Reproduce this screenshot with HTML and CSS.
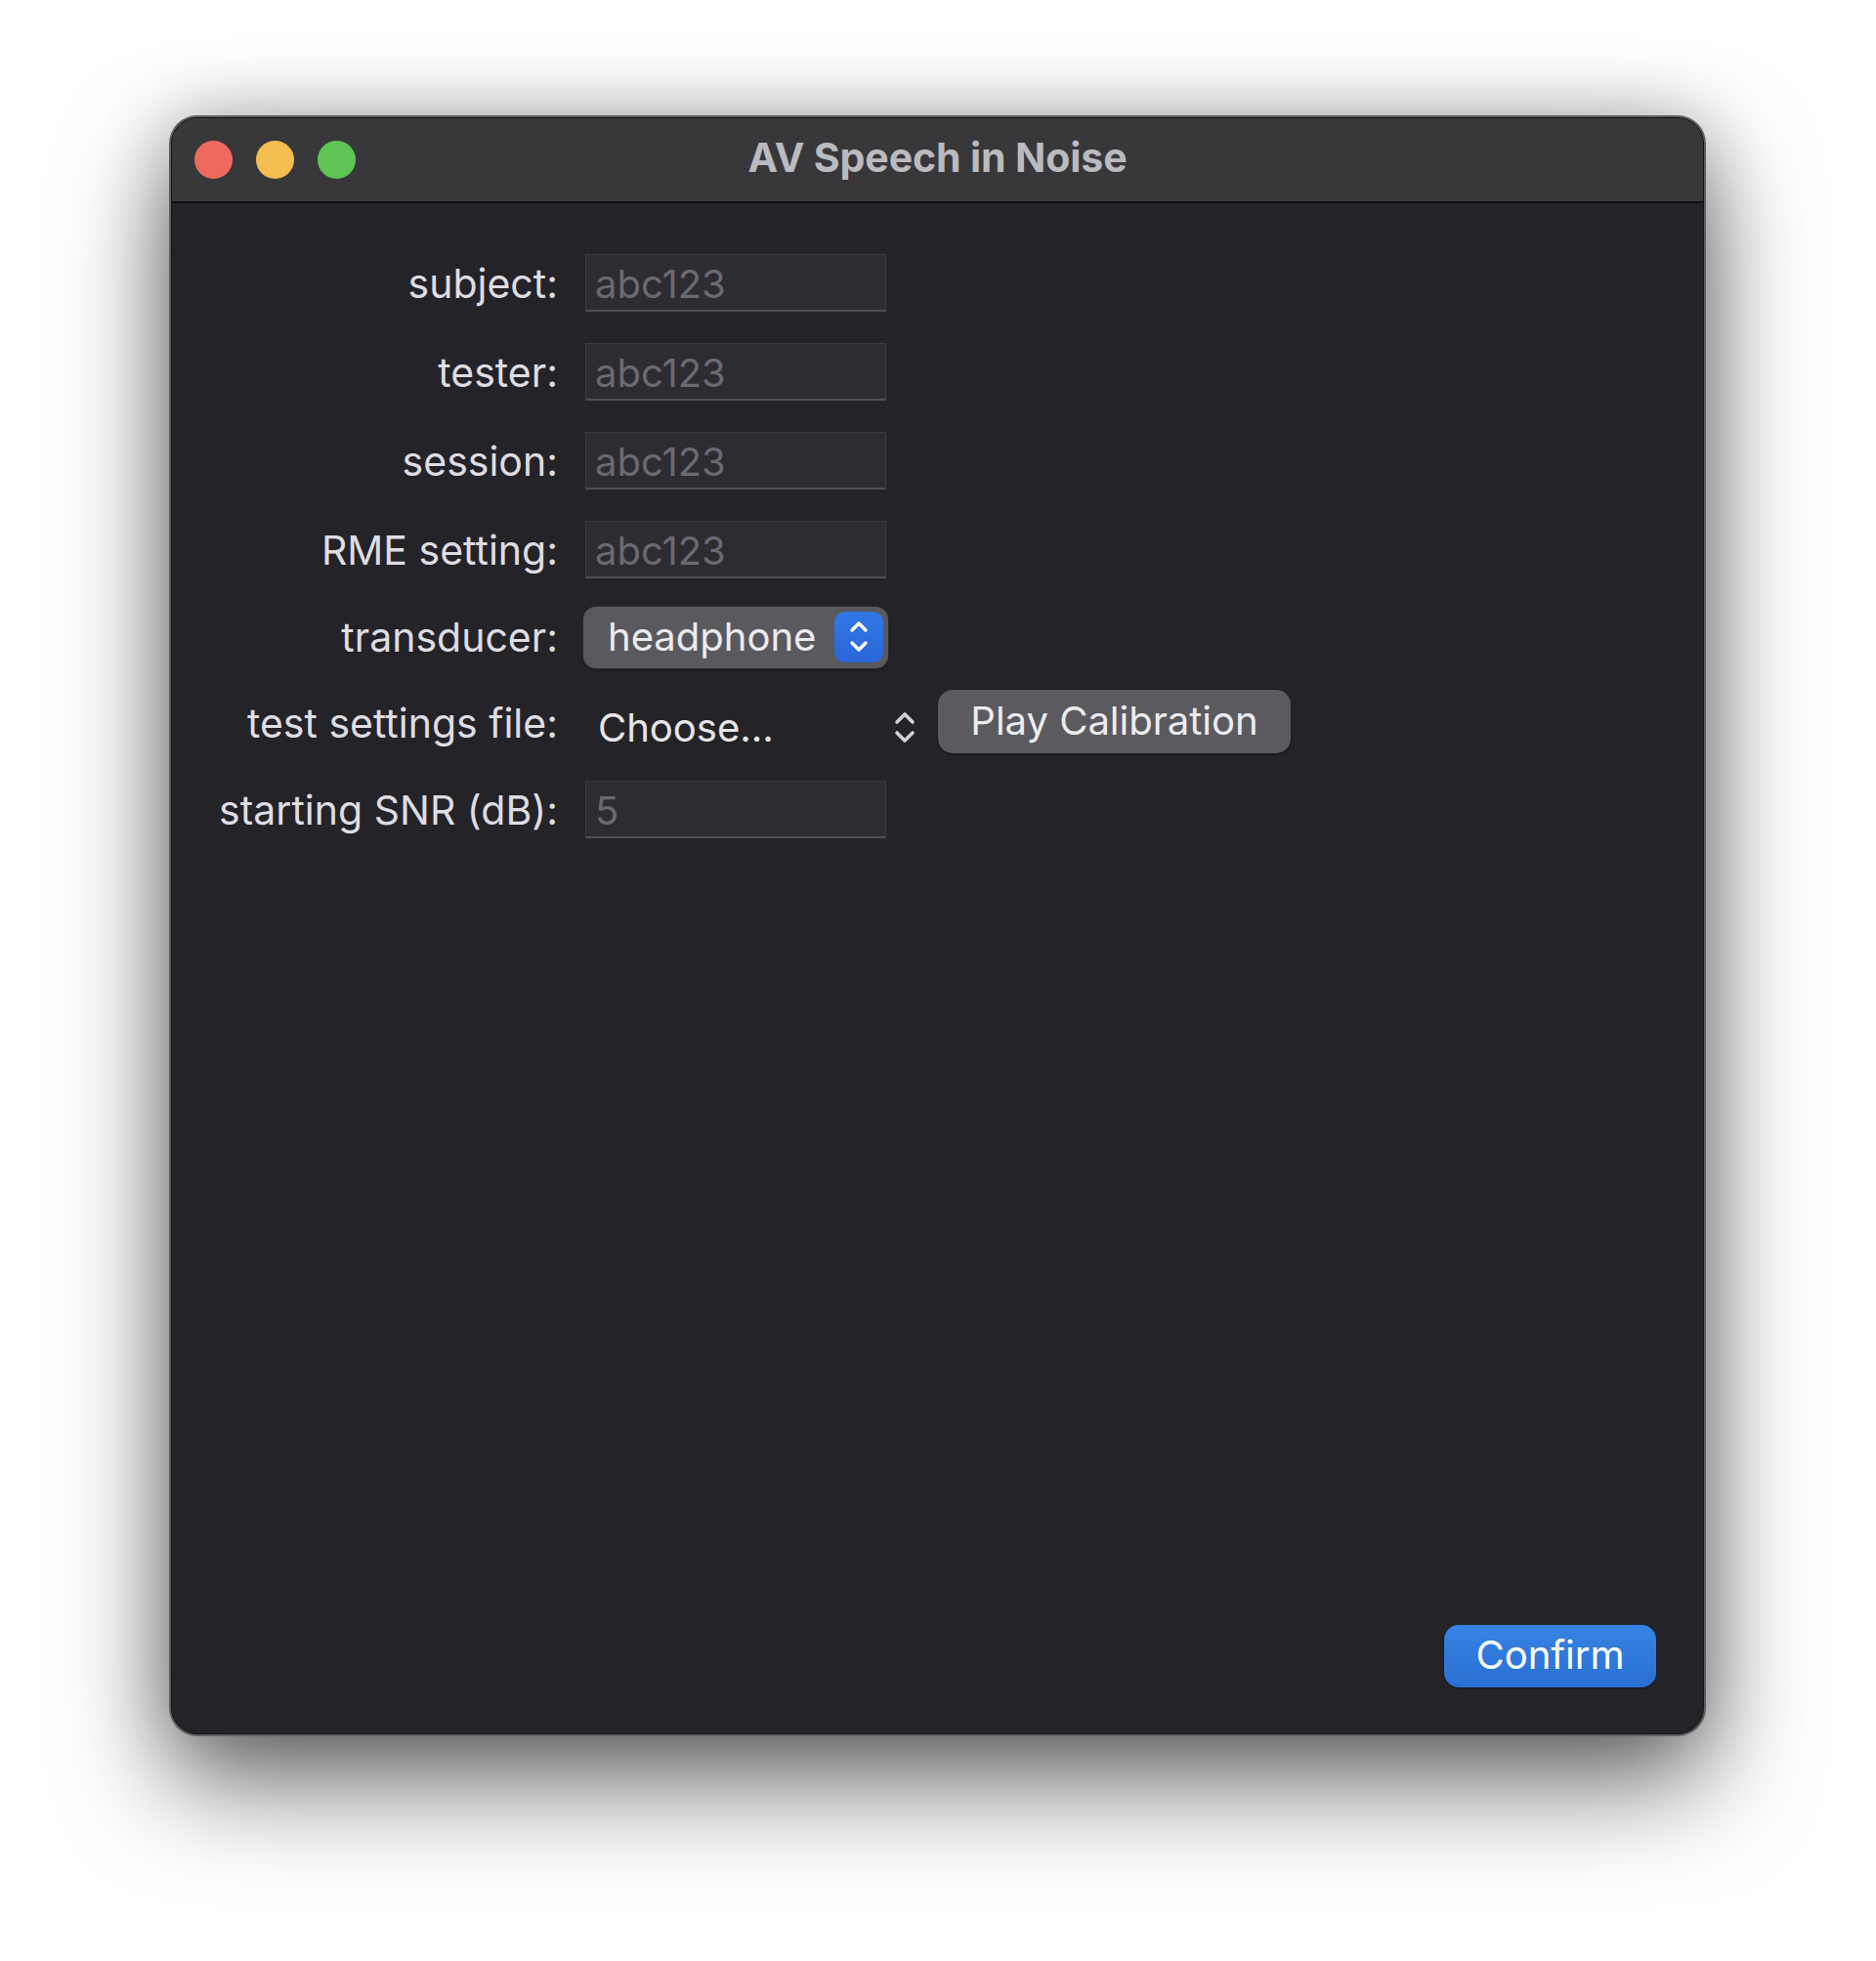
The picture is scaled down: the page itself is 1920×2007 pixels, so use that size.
FILE: index.html
```html
<!DOCTYPE html>
<html lang="en">
<head>
<meta charset="utf-8">
<title>AV Speech in Noise</title>
<link rel="stylesheet" href="styles.css">
</head>
<body>
<div class="desk">
  <div class="window">
    <div class="frame">
      <div class="titlebar">
        <div class="lights">
          <span class="light red"></span>
          <span class="light yellow"></span>
          <span class="light green"></span>
        </div>
        <div class="title">AV Speech in Noise</div>
        <div class="spacer"></div>
      </div>
      <div class="content">
        <div class="form">
          <label class="label">subject:</label>
          <div class="cell"><div class="field"><span class="placeholder">abc123</span></div></div>

          <label class="label">tester:</label>
          <div class="cell"><div class="field"><span class="placeholder">abc123</span></div></div>

          <label class="label">session:</label>
          <div class="cell"><div class="field"><span class="placeholder">abc123</span></div></div>

          <label class="label">RME setting:</label>
          <div class="cell"><div class="field"><span class="placeholder">abc123</span></div></div>

          <label class="label">transducer:</label>
          <div class="cell">
            <div class="popup">
              <span class="popup-text">headphone</span>
              <span class="stepper">
                <svg width="50" height="52" viewBox="0 0 50 52">
                  <polyline points="18,19 25,12 32,19" fill="none" stroke="#fff" stroke-width="3.4" stroke-linecap="round" stroke-linejoin="round"/>
                  <polyline points="18,32 25,39 32,32" fill="none" stroke="#fff" stroke-width="3.4" stroke-linecap="round" stroke-linejoin="round"/>
                </svg>
              </span>
            </div>
          </div>

          <label class="label">test settings file:</label>
          <div class="cell">
            <div class="choose">
              <span class="choose-text">Choose...</span>
              <svg class="choose-icon" width="26" height="40" viewBox="0 0 26 40">
                <polyline points="5,15 13,7 21,15" fill="none" stroke="#d2d2d6" stroke-width="3.6" stroke-linecap="round" stroke-linejoin="round"/>
                <polyline points="5,26 13,34 21,26" fill="none" stroke="#d2d2d6" stroke-width="3.6" stroke-linecap="round" stroke-linejoin="round"/>
              </svg>
            </div>
            <button class="btn">Play Calibration</button>
          </div>

          <label class="label">starting SNR (dB):</label>
          <div class="cell"><div class="field"><span class="placeholder">5</span></div></div>
        </div>
        <div class="footer">
          <button class="btn primary">Confirm</button>
        </div>
      </div>
    </div>
  </div>
</div>
</body>
</html>
```
FILE: styles.css
```css
html, body {
  margin: 0;
  padding: 0;
  background: #ffffff;
}
body {
  width: 1920px;
  height: 2007px;
  overflow: hidden;
  font-family: "Inter", "Noto Sans", sans-serif;
}
.desk {
  padding: 118px 0 0 173px;
}
.window {
  width: 1573px;
  height: 1659px;
  box-sizing: border-box;
  padding: 2px;
  border-radius: 29px;
  background: #606064;
  box-shadow: 0 48px 110px rgba(0, 0, 0, 0.58), 0 0 70px rgba(0, 0, 0, 0.22);
}
.frame {
  height: 100%;
  box-sizing: border-box;
  border-radius: 27px;
  border: 1px solid #141416;
  background: #242328;
  overflow: hidden;
  display: flex;
  flex-direction: column;
}
.titlebar {
  height: 85px;
  flex: 0 0 auto;
  background: #38383b;
  border-bottom: 2px solid #0d0d0f;
  display: grid;
  grid-template-columns: 1fr auto 1fr;
  align-items: center;
}
.lights {
  display: flex;
  gap: 24px;
  padding-left: 23px;
}
.light {
  width: 39px;
  height: 39px;
  border-radius: 50%;
  display: block;
}
.red { background: #ee6a5e; }
.yellow { background: #f5bd4f; }
.green { background: #5fc454; }
.title {
  color: #bbbbbf;
  font-weight: 700;
  font-size: 41px;
  padding-bottom: 5px;
  letter-spacing: -0.1px;
}
.content {
  flex: 1;
  display: flex;
  flex-direction: column;
  padding: 36px 48px 47px 0;
}
.form {
  display: grid;
  grid-template-columns: 395px 1fr;
  grid-template-rows: 91px 91px 91px 91px 88px 87px 91px;
  column-gap: 28px;
  align-items: center;
}
.label {
  text-align: right;
  color: #dedde2;
  font-size: 41px;
  white-space: nowrap;
}
.cell {
  display: flex;
  align-items: center;
}
.field {
  width: 308px;
  height: 59px;
  box-sizing: border-box;
  background: #2d2c31;
  border: 1px solid #3b3a3f;
  border-bottom: 2px solid #505054;
  display: flex;
  align-items: center;
  padding-left: 9px;
}
.placeholder {
  color: #6b6a70;
  font-size: 40px;
  padding-top: 3px;
}
.popup {
  margin-left: -2px;
  width: 312px;
  height: 63px;
  box-sizing: border-box;
  background: #5a595e;
  border-radius: 13px;
  box-shadow: 0 0 0 1px #2b2a2e, 0 2px 2px rgba(0, 0, 0, 0.35);
  display: flex;
  align-items: center;
  justify-content: space-between;
  padding: 0 5px 0 25px;
}
.popup-text {
  color: #ebebee;
  font-size: 40px;
  padding-bottom: 2px;
}
.stepper {
  width: 50px;
  height: 52px;
  border-radius: 11px;
  background: linear-gradient(#3277e6, #2a67d8);
  display: block;
}
.stepper svg {
  display: block;
}
.choose {
  width: 346px;
  height: 63px;
  box-sizing: border-box;
  display: flex;
  align-items: center;
  justify-content: space-between;
  padding: 0 6px 0 13px;
}
.choose-text {
  color: #e6e6e9;
  font-size: 40px;
  padding-top: 10px;
}
.choose-icon {
  display: block;
  margin-top: 8px;
}
.btn {
  font-family: "Inter", "Noto Sans", sans-serif;
  font-size: 40px;
  color: #ececef;
  border: none;
  border-radius: 15px;
  background: #5b5a5f;
  box-shadow: 0 1px 2px rgba(0, 0, 0, 0.5);
  height: 65px;
  padding: 0 0 2px 0;
  width: 361px;
  margin-left: 15px;
  margin-top: -2px;
}
.footer {
  margin-top: auto;
  display: flex;
  justify-content: flex-end;
}
.btn.primary {
  width: 217px;
  height: 64px;
  margin: 0;
  color: #ffffff;
  background: linear-gradient(#3783e4, #2a6fd3);
  padding-bottom: 4px;
}
```
